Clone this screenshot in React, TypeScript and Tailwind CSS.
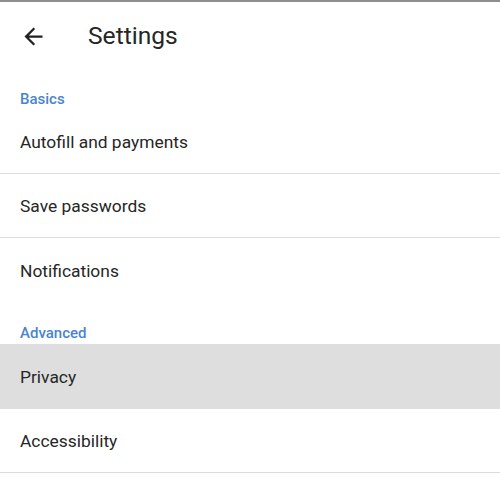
const font = { fontFamily: "Roboto, 'Noto Sans', sans-serif" };

type Item = { label: string; active?: boolean; divider?: boolean };

const sections: { title: string; items: Item[] }[] = [
  {
    title: "Basics",
    items: [
      { label: "Autofill and payments", divider: true },
      { label: "Save passwords", divider: true },
      { label: "Notifications" },
    ],
  },
  {
    title: "Advanced",
    items: [
      { label: "Privacy", active: true },
      { label: "Accessibility", divider: true },
    ],
  },
];

function BackArrow() {
  return (
    <svg width="27" height="27" viewBox="0 0 24 24" className="text-[#202124]">
      <path fill="currentColor" d="M20 11H7.83l5.59-5.59L12 4l-8 8 8 8 1.41-1.41L7.83 13H20v-2z" />
    </svg>
  );
}

export default function App() {
  return (
    <div className="w-[500px] h-[477px] bg-white overflow-hidden border-t-2 border-[#8e8e8e]" style={font}>
      <div className="h-[66px] flex items-center pl-5 pt-[2px]">
        <BackArrow />
        <h1 className="ml-[41px] text-[24.6px] text-[#262626] leading-none">Settings</h1>
      </div>

      {sections.map((section) => (
        <div key={section.title}>
          <div className="h-[42px] pt-[21px] px-5">
            <h2 className="text-[15px] leading-[20px] font-medium text-[#4a84cf]">{section.title}</h2>
          </div>
          {section.items.map((item) => (
            <div
              key={item.label}
              className={`flex items-center px-5 pt-[2px] text-[17.4px] text-[#262626] ${
                item.active ? "bg-[#dedede] h-[65px]" : "h-[64px]"
              } ${item.divider ? "border-b border-[#dcdcdc]" : ""}`}
            >
              {item.label}
            </div>
          ))}
        </div>
      ))}
    </div>
  );
}
